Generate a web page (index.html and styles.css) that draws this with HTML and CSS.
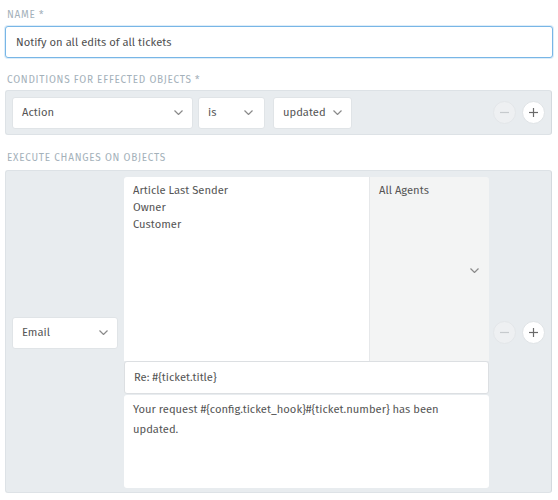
FILE: index.html
```html
<!DOCTYPE html>
<html>
<head>
<meta charset="utf-8">
<link rel="stylesheet" href="styles.css">
</head>
<body>
<div class="page">
  <div class="label label-name">Name *</div>
  <div class="input focused">Notify on all edits of all tickets</div>

  <div class="label label-cond">Conditions for effected objects *</div>
  <div class="box cond-row">
    <div class="select sel-action"><span>Action</span><svg class="chev" width="9" height="5" viewBox="0 0 9 5"><polyline points="0.5,0.5 4.5,4.5 8.5,0.5"/></svg></div>
    <div class="select sel-is"><span>is</span><svg class="chev" width="9" height="5" viewBox="0 0 9 5"><polyline points="0.5,0.5 4.5,4.5 8.5,0.5"/></svg></div>
    <div class="select sel-updated"><span>updated</span><svg class="chev" width="9" height="5" viewBox="0 0 9 5"><polyline points="0.5,0.5 4.5,4.5 8.5,0.5"/></svg></div>
    <div class="btns">
      <span class="circle minus"><svg width="9" height="9" viewBox="0 0 9 9"><line x1="0" y1="4.5" x2="9" y2="4.5"/></svg></span>
      <span class="circle plus"><svg width="9" height="9" viewBox="0 0 9 9"><line x1="0" y1="4.5" x2="9" y2="4.5"/><line x1="4.5" y1="0" x2="4.5" y2="9"/></svg></span>
    </div>
  </div>

  <div class="label label-exec">Execute changes on objects</div>
  <div class="box exec-row">
    <div class="select sel-email"><span>Email</span><svg class="chev" width="9" height="5" viewBox="0 0 9 5"><polyline points="0.5,0.5 4.5,4.5 8.5,0.5"/></svg></div>
    <div class="email-config">
      <div class="recipients">
        <div class="rec-list">
          <div>Article Last Sender</div>
          <div>Owner</div>
          <div>Customer</div>
        </div>
        <div class="rec-groups">
          <div>All Agents</div>
          <svg class="chev rec-chev" width="9" height="5" viewBox="0 0 9 5"><polyline points="0.5,0.5 4.5,4.5 8.5,0.5"/></svg>
        </div>
      </div>
      <div class="subject">Re: #{ticket.title}</div>
      <div class="body-text">Your request #{config.ticket_hook}#{ticket.number} has been updated.</div>
    </div>
    <div class="btns">
      <span class="circle minus"><svg width="9" height="9" viewBox="0 0 9 9"><line x1="0" y1="4.5" x2="9" y2="4.5"/></svg></span>
      <span class="circle plus"><svg width="9" height="9" viewBox="0 0 9 9"><line x1="0" y1="4.5" x2="9" y2="4.5"/><line x1="4.5" y1="0" x2="4.5" y2="9"/></svg></span>
    </div>
  </div>
</div>
</body>
</html>
```
FILE: styles.css
```css
* { box-sizing: border-box; }
html, body { margin: 0; padding: 0; background: #fff; }
body {
  font-family: "Fira Sans", Lato, "Open Sans", sans-serif;
  font-size: 11.2px;
  color: #555;
  width: 558px;
}
.page {
  padding: 0 5px 0 5px;
  display: flex;
  flex-direction: column;
}
.label {
  font-size: 10px;
  line-height: 12px;
  letter-spacing: 0.75px;
  text-transform: uppercase;
  color: #a4b1ba;
  padding-left: 2px;
}
.label-name { margin-top: 9px; margin-bottom: 5px; }
.label-cond { margin-top: 16px; margin-bottom: 4px; }
.label-exec { margin-top: 17px; margin-bottom: 6px; }

.input {
  height: 32px;
  width: 548px;
  border: 1px solid #78b6e6;
  border-radius: 3px;
  box-shadow: 0 0 0 1px rgba(120, 182, 230, 0.25);
  padding: 0 10px;
  display: flex;
  align-items: center;
  color: #4f4f4f;
  background: #fff;
}

.box {
  width: 547px;
  background: #e8ecef;
  border: 1px solid #dde2e6;
  border-right-color: #d3d9de;
  border-radius: 3px;
  display: flex;
  align-items: center;
}
.cond-row {
  height: 45px;
  padding: 0 6px;
}
.exec-row {
  height: 323px;
  padding: 6px 6px 4px 6px;
}

.select {
  height: 32px;
  background: #fff;
  border: 1px solid #e0e4e7;
  border-radius: 3px;
  display: flex;
  align-items: center;
  justify-content: space-between;
  padding: 0 9px 0 9px;
  flex-shrink: 0;
}
.chev polyline {
  fill: none;
  stroke: #8a8a8a;
  stroke-width: 1.2;
}
.sel-action { width: 181px; margin-right: 5px; }
.sel-is { width: 67px; margin-right: 8px; padding-right: 11px; }
.sel-updated { width: 79px; }
.sel-email { width: 106px; margin-right: 6px; }

.btns {
  margin-left: auto;
  display: flex;
  gap: 6px;
  align-items: center;
}
.circle {
  width: 23px;
  height: 23px;
  border-radius: 50%;
  display: flex;
  align-items: center;
  justify-content: center;
  border: 1px solid #dfe3e6;
}
.circle line { stroke-width: 1.2; }
.minus { background: #eef0f2; border-color: #e3e6e9; }
.minus line { stroke: #c6cacd; }
.plus { background: #fff; }
.plus line { stroke: #6a6a6a; }

.email-config {
  width: 365px;
  align-self: stretch;
  display: flex;
  flex-direction: column;
}
.recipients {
  height: 184px;
  display: flex;
  border-radius: 3px 3px 0 0;
  overflow: hidden;
}
.rec-list {
  width: 245px;
  background: #fff;
  padding: 5px 9px;
  line-height: 17px;
}
.rec-groups {
  flex: 1;
  background: #f3f4f4;
  border-left: 1px solid #e6e8ea;
  padding: 5px 10px 0 9px;
  line-height: 17px;
  display: flex;
  flex-direction: column;
}
.rec-chev {
  align-self: flex-end;
  margin-top: 69px;
}
.subject {
  height: 33px;
  background: #fff;
  border: 1px solid #dcdfe2;
  border-radius: 3px;
  padding: 0 9px;
  display: flex;
  align-items: center;
}
.body-text {
  flex: 1;
  margin-top: 1px;
  background: #fff;
  border-radius: 3px;
  padding: 5px 9px;
  line-height: 20px;
}
```
